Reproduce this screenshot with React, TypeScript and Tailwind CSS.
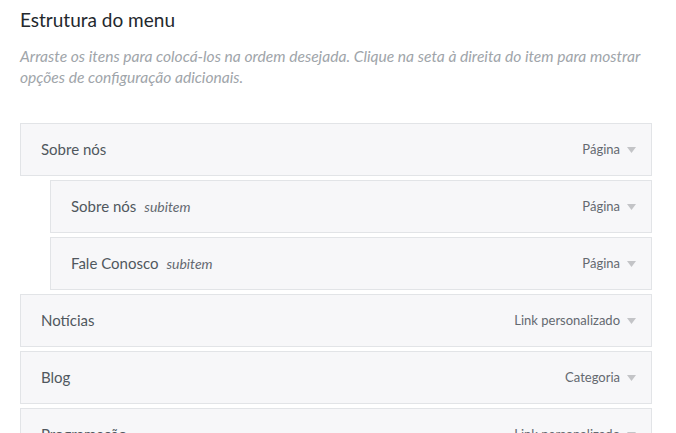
const items = [
  { title: "Sobre nós", type: "Página", sub: false },
  { title: "Sobre nós", type: "Página", sub: true },
  { title: "Fale Conosco", type: "Página", sub: true },
  { title: "Notícias", type: "Link personalizado", sub: false },
  { title: "Blog", type: "Categoria", sub: false },
  { title: "Programação", type: "Link personalizado", sub: false },
  { title: "Contato", type: "Página", sub: false },
];

function Caret() {
  return (
    <svg aria-hidden="true" width="9" height="6" viewBox="0 0 9 6" className="ml-[7px] mt-[1px]">
      <path d="M0 0 H9 L4.5 6 Z" fill="#c3c4c7" />
    </svg>
  );
}

export default function App() {
  return (
    <div className="min-h-screen bg-white px-5 pt-[7px] font-['Lato','Liberation_Sans',sans-serif]">
      <h2 className="text-[19px] leading-[26px] text-[#23282d]">Estrutura do menu</h2>
      <p className="mt-[13px] text-[15.6px] italic leading-[21px] text-[#a0a5aa]">
        Arraste os itens para colocá-los na ordem desejada. Clique na seta à direita do item para mostrar opções de configuração adicionais.
      </p>

      <ul className="mt-[35px] flex w-[632px] flex-col gap-1">
        {items.map((item, i) => (
          <li
            key={i}
            className={
              item.sub
                ? "ml-[30px] flex h-[53px] items-center justify-between border border-[#e2e4e7] bg-[#f7f7f9] pl-5 pr-[15px]"
                : "flex h-[53px] items-center justify-between border border-[#e2e4e7] bg-[#f7f7f9] pl-5 pr-[15px]"
            }
          >
            <span className="flex items-baseline text-[15px] text-[#50575e]">
              {item.title}
              {item.sub ? <em className="ml-2 text-[14px] text-[#646970]">subitem</em> : null}
            </span>
            <span className="flex items-center text-[13px] text-[#646970]">
              {item.type}
              <Caret />
            </span>
          </li>
        ))}
      </ul>
    </div>
  );
}
